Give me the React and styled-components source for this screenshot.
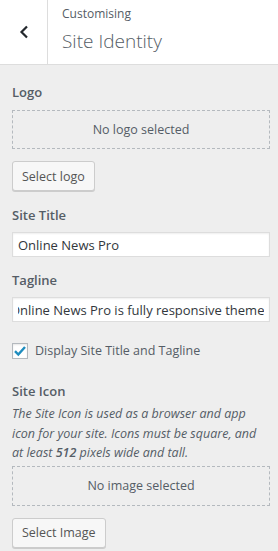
import { useEffect, useRef } from "react";
import styled, { createGlobalStyle } from "styled-components";

const GlobalStyle = createGlobalStyle`
  html, body {
    margin: 0;
    padding: 0;
    background: #eeeeee;
    font-family: "Open Sans", "Noto Sans", sans-serif;
  }
  * { box-sizing: border-box; }
`;

const Panel = styled.div`
  width: 278px;
  min-height: 551px;
  background: #eeeeee;
  color: #555d66;
`;

const Header = styled.header`
  display: flex;
  height: 65px;
  background: #fff;
  border-bottom: 1px solid #dddddd;
`;

const BackButton = styled.button`
  width: 48px;
  flex: none;
  display: flex;
  align-items: center;
  justify-content: center;
  background: #fff;
  border: none;
  border-right: 1px solid #dddddd;
  padding: 0;
  color: #23282d;
  cursor: pointer;
`;

const HeaderTitle = styled.div`
  display: flex;
  flex-direction: column;
  padding: 5px 0 0 14px;
`;

const Crumb = styled.span`
  font-size: 12px;
  line-height: 18px;
  color: #555d66;
`;

const Title = styled.h1`
  margin: 5px 0 0;
  font-size: 19px;
  font-weight: 300;
  line-height: 26px;
  color: #555d66;
`;

const Body = styled.div`
  display: flex;
  flex-direction: column;
  padding: 17px 8px 0 12px;
`;

const Section = styled.section`
  display: flex;
  flex-direction: column;
  margin-bottom: ${(p) => p.$gap || 18}px;
`;

const Label = styled.label`
  font-size: 13px;
  font-weight: 600;
  line-height: 20px;
  color: #555d66;
  margin-bottom: ${(p) => p.$gap || 8}px;
`;

const Placeholder = styled.div`
  height: ${(p) => p.$h || 39}px;
  display: flex;
  align-items: center;
  justify-content: center;
  border: 1px dashed #b4b9be;
  font-size: 12.5px;
  color: #555d66;
`;

const Button = styled.button`
  align-self: flex-start;
  margin-top: 12px;
  height: 30px;
  padding: 0 9px;
  font-family: inherit;
  font-size: 12.5px;
  color: #555;
  background: #f7f7f7;
  border: 1px solid #cccccc;
  border-radius: 3px;
  box-shadow: 0 1px 0 #cccccc;
`;

const Input = styled.input`
  width: 100%;
  height: 25px;
  padding: 0 5px;
  font-family: inherit;
  font-size: 13px;
  color: #32373c;
  background: #fff;
  border: 1px solid #dddddd;
  box-shadow: inset 0 1px 2px rgba(0, 0, 0, 0.07);
  outline: none;
`;

const CheckRow = styled.label`
  display: flex;
  align-items: center;
  gap: 7px;
  font-size: 12.5px;
  color: #555d66;
  margin-bottom: 22px;
`;

const Box = styled.span`
  width: 16px;
  height: 16px;
  flex: none;
  display: flex;
  align-items: center;
  justify-content: center;
  background: #fff;
  border: 1px solid #b4b9be;
  box-shadow: inset 0 1px 2px rgba(0, 0, 0, 0.1);
`;

const Description = styled.p`
  margin: 0 0 3px;
  font-size: 12.5px;
  font-style: italic;
  line-height: 19.5px;
  color: #555d66;
`;

const Strong = styled.strong`
  font-weight: 600;
`;

const Tagline = () => {
  const ref = useRef(null);
  useEffect(() => {
    if (ref.current) ref.current.scrollLeft = ref.current.scrollWidth;
  }, []);
  return (
    <Input
      ref={ref}
      readOnly
      defaultValue="Online News Pro is fully responsive theme"
    />
  );
};

export default function App() {
  return (
    <Panel>
      <GlobalStyle />
      <Header>
        <BackButton aria-label="Back">
          <svg width="10" height="14" viewBox="0 0 10 14">
            <path d="M8 1.5 L2.5 7 L8 12.5" fill="none" stroke="#23282d" strokeWidth="2.2" />
          </svg>
        </BackButton>
        <HeaderTitle>
          <Crumb>Customising</Crumb>
          <Title>Site Identity</Title>
        </HeaderTitle>
      </Header>

      <Body>
        <Section $gap={14}>
          <Label>Logo</Label>
          <Placeholder>No logo selected</Placeholder>
          <Button>Select logo</Button>
        </Section>

        <Section $gap={13}>
          <Label $gap={7}>Site Title</Label>
          <Input defaultValue="Online News Pro" />
        </Section>

        <Section $gap={20}>
          <Label $gap={7}>Tagline</Label>
          <Tagline />
        </Section>

        <CheckRow>
          <Box>
            <svg width="14" height="14" viewBox="0 0 14 14">
              <path d="M2 7.2 L5.3 10.5 L12 3" fill="none" stroke="#1e8cbe" strokeWidth="2.4" />
            </svg>
          </Box>
          Display Site Title and Tagline
        </CheckRow>

        <Section>
          <Label $gap={3}>Site Icon</Label>
          <Description>
            The Site Icon is used as a browser and app icon for your site. Icons
            must be square, and at least <Strong>512</Strong> pixels wide and tall.
          </Description>
          <Placeholder $h={40}>No image selected</Placeholder>
          <Button>Select Image</Button>
        </Section>
      </Body>
    </Panel>
  );
}
